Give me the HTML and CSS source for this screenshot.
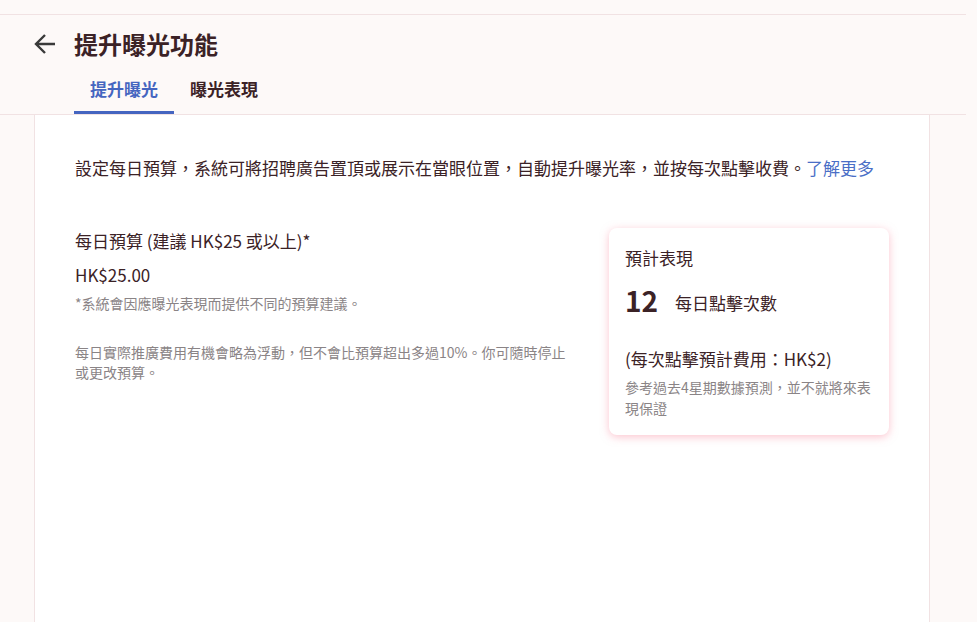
FILE: index.html
```html
<!DOCTYPE html>
<html lang="zh-Hant">
<head>
  <meta charset="UTF-8" />
  <meta name="viewport" content="width=device-width, initial-scale=1.0"/>
  <title>提升曝光功能</title>
  <link rel="stylesheet" href="styles.css">
</head>
<body>
  <div class="page">
    <header class="page-header">
      <div class="title-row">
        <a class="back" href="#" aria-label="返回">
          <svg width="24" height="24" viewBox="0 0 24 24">
            <path d="M22 12H3.5M12 3l-9 9 9 9" fill="none" stroke="#3a3a3a" stroke-width="2.4"/>
          </svg>
        </a>
        <h1>提升曝光功能</h1>
      </div>
      <nav class="tabs">
        <a class="tab active" href="#">提升曝光</a>
        <a class="tab" href="#">曝光表現</a>
      </nav>
    </header>

    <main class="panel">
      <p class="intro">設定每日預算，系統可將招聘廣告置頂或展示在當眼位置，自動提升曝光率，並按每次點擊收費。<a href="#">了解更多</a></p>

      <div class="budget-row">
        <div class="budget">
          <div class="label">每日預算 (建議 HK$25 或以上)*</div>
          <div class="amount">HK$25.00</div>
          <p class="hint">*系統會因應曝光表現而提供不同的預算建議。</p>
          <p class="hint spaced">每日實際推廣費用有機會略為浮動，但不會比預算超出多過10%。你可隨時停止或更改預算。</p>
        </div>

        <div class="forecast">
          <div class="forecast-title">預計表現</div>
          <div class="clicks">
            <span class="num">12</span>
            <span class="unit">每日點擊次數</span>
          </div>
          <div class="cost">(每次點擊預計費用：HK$2)</div>
          <p class="hint">參考過去4星期數據預測，並不就將來表現保證</p>
        </div>
      </div>
    </main>
  </div>
</body>
</html>
```

FILE: styles.css
```css
body {
  margin: 0;
  font-family: 'Noto Sans CJK TC', 'Noto Sans', sans-serif;
  background-color: #fdf9f8;
  color: #3b2226;
}

.page {
  width: 966px;
  padding-top: 14px;
}

.page-header {
  border-top: 1px solid #f1e2e3;
  border-bottom: 1px solid #f1e2e3;
}

.title-row {
  display: flex;
  align-items: center;
  height: 58px;
  padding-left: 33px;
}

.back {
  display: flex;
  width: 24px;
  height: 24px;
  margin-right: 17px;
}

.title-row h1 {
  margin: 0;
  font-size: 24px;
  font-weight: 700;
  line-height: 32px;
}

.tabs {
  display: flex;
  padding-left: 74px;
}

.tab {
  width: 100px;
  text-align: center;
  font-size: 17px;
  font-weight: 700;
  line-height: 24px;
  padding: 4px 0 10px;
  color: #3b2226;
  text-decoration: none;
  border-bottom: 3px solid transparent;
}

.tab.active {
  color: #4565c0;
  border-bottom-color: #4565c0;
}

.panel {
  width: 814px;
  min-height: 460px;
  margin-left: 34px;
  padding: 41px 40px 40px;
  background: #fff;
  border-left: 1px solid #f1e2e3;
  border-right: 1px solid #f1e2e3;
}

.intro {
  margin: 0;
  font-size: 17px;
  line-height: 24px;
}

.intro a {
  color: #4a6ec6;
  text-decoration: none;
}

.budget-row {
  display: flex;
  justify-content: space-between;
  margin-top: 48px;
}

.budget {
  width: 495px;
}

.label {
  font-size: 17px;
  line-height: 24px;
  margin-top: 1px;
}

.amount {
  font-size: 17px;
  line-height: 24px;
  margin-top: 10px;
}

.hint {
  margin: 6px 0 0;
  font-size: 14px;
  line-height: 20px;
  color: #8a8486;
}

.hint.spaced {
  margin-top: 29px;
}

.forecast {
  width: 248px;
  padding: 18px 16px 16px;
  background: #fff;
  border-radius: 8px;
  box-shadow: 0 2px 8px rgba(250, 140, 160, 0.5);
}

.forecast-title {
  font-size: 17px;
  line-height: 24px;
}

.clicks {
  display: flex;
  align-items: center;
  margin-top: 8px;
  line-height: 36px;
}

.num {
  font-size: 28px;
  font-weight: 700;
  margin-right: 17px;
}

.unit {
  font-size: 17px;
  padding-top: 7px;
}

.cost {
  font-size: 17px;
  line-height: 24px;
  margin-top: 26px;
}

.forecast .hint {
  margin-top: 6px;
  line-height: 21px;
}
```
